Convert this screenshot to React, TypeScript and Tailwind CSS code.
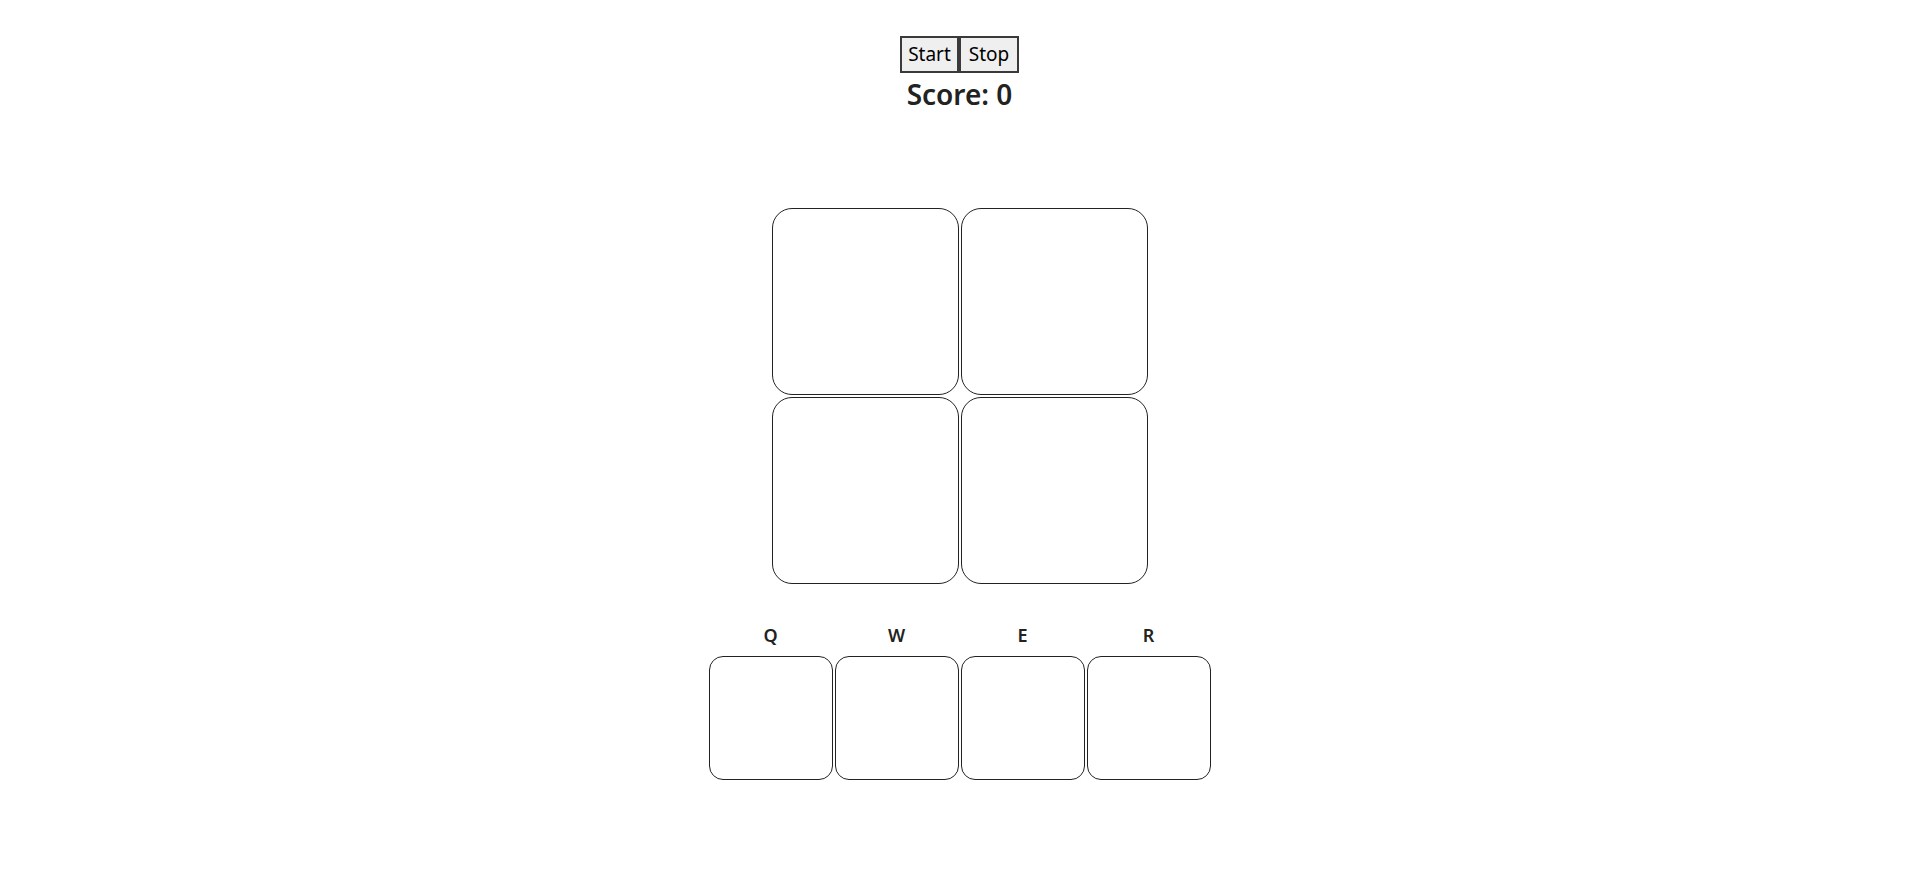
import React from "react";

export default function App() {
  const keys = ["Q", "W", "E", "R"];
  return (
    <div className="min-h-screen bg-white flex flex-col items-center pt-[36px] font-['Noto_Sans','Open_Sans',sans-serif] text-[#222]">
      <div className="flex">
        <button className="w-[59px] h-[37px] border-2 border-[#3a3a3a] bg-[#efefef] text-[19px] leading-none text-black">
          Start
        </button>
        <button className="w-[60px] h-[37px] border-2 border-[#3a3a3a] bg-[#efefef] text-[19px] leading-none text-black">
          Stop
        </button>
      </div>
      <div className="mt-[4px] text-[28px] font-semibold leading-[34px]">Score: 0</div>
      <div className="mt-[97px] grid grid-cols-2 gap-[2px]">
        {[0, 1, 2, 3].map((i) => (
          <div key={i} className="w-[187px] h-[187px] border border-[#222] rounded-[20px]" />
        ))}
      </div>
      <div className="mt-[41px] flex gap-[2px]">
        {keys.map((k) => (
          <div key={k} className="flex flex-col items-center">
            <div className="text-[18px] font-semibold leading-[20px] mb-[11px]">{k}</div>
            <div className="w-[124px] h-[124px] border border-[#222] rounded-[14px]" />
          </div>
        ))}
      </div>
    </div>
  );
}
